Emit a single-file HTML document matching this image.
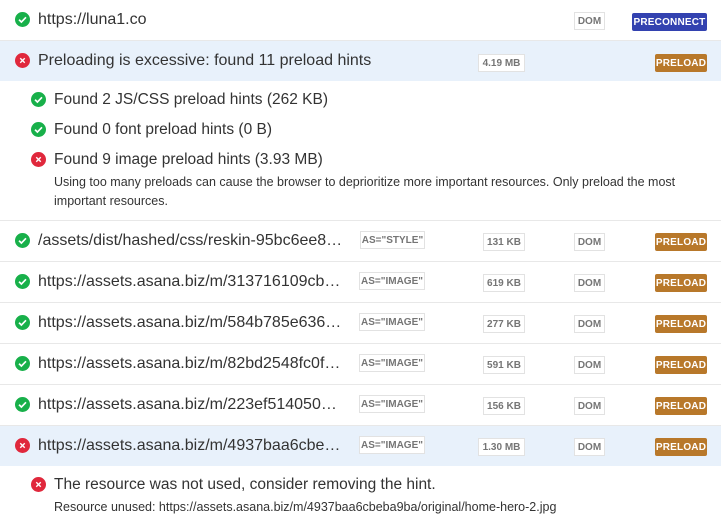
<!DOCTYPE html>
<html><head><meta charset="utf-8"><style>
*{margin:0;padding:0;box-sizing:border-box}
body{width:721px;height:523px;background:#fff;font-family:"Liberation Sans",Arial,sans-serif;color:#333;position:relative;overflow:hidden}
.row{position:absolute;left:0;width:721px;height:41px;border-bottom:1px solid #e8e8e8}
.hl{background:#e8f1fb}
.ic{position:absolute;width:15px;height:15px}
.t{position:absolute;font-size:16px;line-height:20px;white-space:nowrap;color:#333}
.b{position:absolute;height:18px;font-size:10px;font-weight:bold;display:flex;align-items:center;justify-content:center;border:1px solid #e2e2e2;color:#757575;background:#fff;white-space:nowrap}
.p{position:absolute;height:18px;font-size:10px;font-weight:bold;display:flex;align-items:center;justify-content:center;color:#fff;border-radius:2px;white-space:nowrap;letter-spacing:.2px}
.pre{background:#b8782a;left:655px;width:52px}
.s{position:absolute;font-size:12.5px;line-height:19px;color:#333}
</style></head><body>
<svg width="0" height="0" style="position:absolute"><defs>
<symbol id="ok" viewBox="0 0 16 16"><circle cx="8" cy="8" r="8" fill="#18b04a"/><path d="M4.3 8.2l2.5 2.5 4.9-5" fill="none" stroke="#fff" stroke-width="1.8"/></symbol>
<symbol id="bad" viewBox="0 0 16 16"><circle cx="8" cy="8" r="8" fill="#e0283c"/><path d="M5.6 5.6l4.8 4.8M10.4 5.6l-4.8 4.8" fill="none" stroke="#fff" stroke-width="1.5"/></symbol>
</defs></svg>

<div class="row" style="top:0">
<svg class="ic" style="left:15px;top:12px"><use href="#ok"/></svg><div class="t" style="left:38px;top:10px">https://luna1.co</div>
<div class="b" style="left:574px;top:12px;width:31px">DOM</div>
<div class="p" style="left:632px;top:13px;width:75px;background:#3342b0">PRECONNECT</div>
</div>

<div class="row hl" style="top:41px;height:40px;border-bottom:none">
<svg class="ic" style="left:15px;top:12px"><use href="#bad"/></svg><div class="t" style="left:38px;top:10px">Preloading is excessive: found 11 preload hints</div>
<div class="b" style="left:478px;top:13px;width:47px">4.19 MB</div>
<div class="p pre" style="top:13px">PRELOAD</div>
</div>

<svg class="ic" style="left:31px;top:92px"><use href="#ok"/></svg><div class="t" style="left:54px;top:90px;font-size:15.5px">Found 2 JS/CSS preload hints (262 KB)</div>
<svg class="ic" style="left:31px;top:122px"><use href="#ok"/></svg><div class="t" style="left:54px;top:120px;font-size:15.5px">Found 0 font preload hints (0 B)</div>
<svg class="ic" style="left:31px;top:152px"><use href="#bad"/></svg><div class="t" style="left:54px;top:150px;font-size:15.5px">Found 9 image preload hints (3.93 MB)</div>
<div class="s" style="left:54px;top:173px;width:660px">Using too many preloads can cause the browser to deprioritize more important resources. Only preload the most important resources.</div>
<div style="position:absolute;left:0;top:220px;width:721px;border-top:1px solid #e8e8e8"></div>

<div class="row" style="top:221px">
<svg class="ic" style="left:15px;top:12px"><use href="#ok"/></svg><div class="t" style="left:38px;top:10px">/assets/dist/hashed/css/reskin-95bc6ee8…</div>
<div class="b" style="left:360px;top:10px;width:65px">AS="STYLE"</div>
<div class="b" style="left:483px;top:12px;width:42px">131 KB</div>
<div class="b" style="left:574px;top:12px;width:31px">DOM</div>
<div class="p pre" style="top:12px">PRELOAD</div>
</div>
<div class="row" style="top:262px">
<svg class="ic" style="left:15px;top:12px"><use href="#ok"/></svg><div class="t" style="left:38px;top:10px">https://assets.asana.biz/m/313716109cb…</div>
<div class="b" style="left:359px;top:10px;width:66px">AS="IMAGE"</div>
<div class="b" style="left:483px;top:12px;width:42px">619 KB</div>
<div class="b" style="left:574px;top:12px;width:31px">DOM</div>
<div class="p pre" style="top:12px">PRELOAD</div>
</div>
<div class="row" style="top:303px">
<svg class="ic" style="left:15px;top:12px"><use href="#ok"/></svg><div class="t" style="left:38px;top:10px">https://assets.asana.biz/m/584b785e636…</div>
<div class="b" style="left:359px;top:10px;width:66px">AS="IMAGE"</div>
<div class="b" style="left:483px;top:12px;width:42px">277 KB</div>
<div class="b" style="left:574px;top:12px;width:31px">DOM</div>
<div class="p pre" style="top:12px">PRELOAD</div>
</div>
<div class="row" style="top:344px">
<svg class="ic" style="left:15px;top:12px"><use href="#ok"/></svg><div class="t" style="left:38px;top:10px">https://assets.asana.biz/m/82bd2548fc0f…</div>
<div class="b" style="left:359px;top:10px;width:66px">AS="IMAGE"</div>
<div class="b" style="left:483px;top:12px;width:42px">591 KB</div>
<div class="b" style="left:574px;top:12px;width:31px">DOM</div>
<div class="p pre" style="top:12px">PRELOAD</div>
</div>
<div class="row" style="top:385px">
<svg class="ic" style="left:15px;top:12px"><use href="#ok"/></svg><div class="t" style="left:38px;top:10px">https://assets.asana.biz/m/223ef514050…</div>
<div class="b" style="left:359px;top:10px;width:66px">AS="IMAGE"</div>
<div class="b" style="left:483px;top:12px;width:42px">156 KB</div>
<div class="b" style="left:574px;top:12px;width:31px">DOM</div>
<div class="p pre" style="top:12px">PRELOAD</div>
</div>
<div class="row hl" style="top:426px;height:40px;border-bottom:none">
<svg class="ic" style="left:15px;top:12px"><use href="#bad"/></svg><div class="t" style="left:38px;top:10px">https://assets.asana.biz/m/4937baa6cbe…</div>
<div class="b" style="left:359px;top:10px;width:66px">AS="IMAGE"</div>
<div class="b" style="left:478px;top:12px;width:47px">1.30 MB</div>
<div class="b" style="left:574px;top:12px;width:31px">DOM</div>
<div class="p pre" style="top:12px">PRELOAD</div>
</div>

<svg class="ic" style="left:31px;top:477px"><use href="#bad"/></svg><div class="t" style="left:54px;top:475px;font-size:15.5px">The resource was not used, consider removing the hint.</div>
<div class="s" style="left:54px;top:498px">Resource unused: https://assets.asana.biz/m/4937baa6cbeba9ba/original/home-hero-2.jpg</div>
</body></html>
